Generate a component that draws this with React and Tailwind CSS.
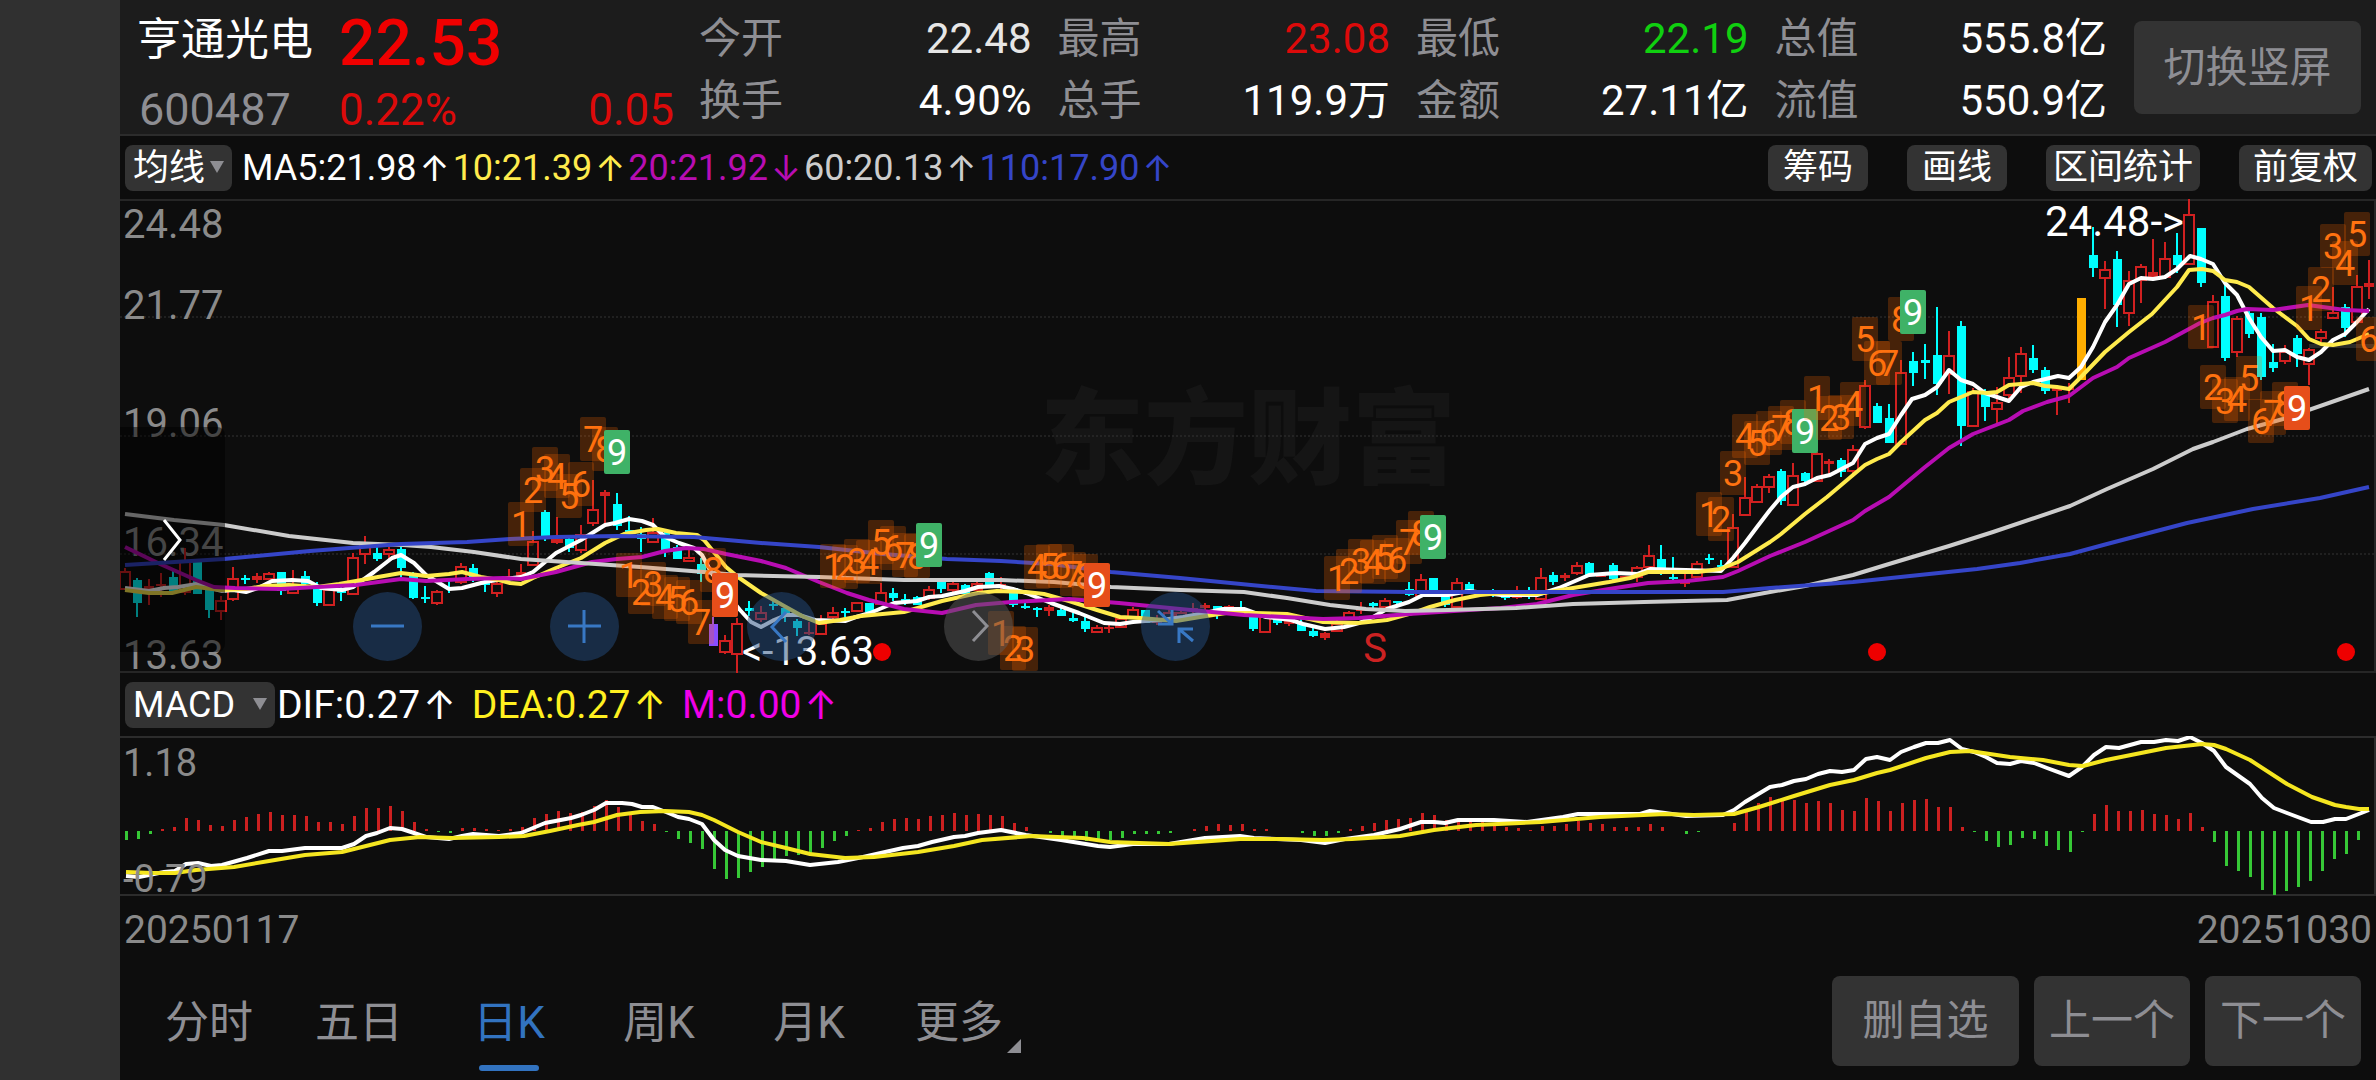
import { useState } from "react";

const STEP = 12;
const xAt = (i) => 125 + i * STEP;

/* kind, high, body top, body bottom, low
   r = hollow red, R = solid red, c = cyan, p = purple, a = amber */
const candles = `
r 568 571 589 589,c 578 580 603 617,R 579 586 589 605,R 573 584 586 597,c 571 577 591 591,r 548 560 592 595,
c 562 562 594 594,c 586 590 610 618,r 596 600 611 620,r 567 578 599 601,c 575 578 580 584,R 573 576 580 583,
r 572 573 579 580,c 572 572 591 595,r 570 585 593 593,c 571 576 584 585,c 582 586 603 606,r 589 589 605 605,
c 587 590 593 601,r 553 557 594 594,r 536 542 554 564,c 547 553 559 561,r 547 549 554 559,c 547 549 568 577,
c 572 573 598 599,c 586 597 598 603,r 590 591 603 605,c 581 587 588 593,r 563 566 582 584,c 564 568 577 582,
c 580 583 585 592,r 581 583 593 597,R 569 576 577 580,R 564 572 576 579,r 531 541 565 565,c 510 512 539 541,
r 517 539 542 544,c 537 539 548 552,r 525 534 550 553,r 480 509 523 526,R 490 492 496 523,c 493 504 526 530,
c 516 530 532 535,c 527 534 539 552,r 518 532 542 543,c 532 533 551 557,c 545 547 559 559,r 548 557 561 561,
c 558 564 574 582,p 617 624 646 646,r 635 640 652 654,r 618 623 654 673,c 601 608 611 616,r 606 612 619 622,
c 600 604 606 610,c 606 608 615 622,c 619 621 628 636,R 622 632 634 635,r 615 623 634 635,r 607 612 617 620,
c 608 611 612 617,r 602 602 611 611,c 603 603 612 612,r 583 592 604 604,c 588 593 598 601,c 594 599 601 605,
c 596 597 605 605,r 586 589 598 600,c 580 582 589 593,r 582 583 590 592,c 584 585 594 594,r 582 583 590 590,
c 572 573 587 587,R 577 584 586 590,c 588 588 605 607,c 602 606 608 609,c 607 608 610 617,R 605 607 611 616,
c 608 610 616 616,c 613 618 621 622,c 617 621 629 632,r 625 627 632 632,R 624 627 629 633,r 617 618 627 627,
r 607 609 617 617,c 610 610 623 623,R 615 621 622 625,r 610 612 618 620,r 608 612 617 618,R 603 608 611 613,
R 603 605 608 610,c 606 606 611 619,R 605 606 608 610,c 601 609 611 611,c 612 616 629 631,r 612 616 632 632,
c 616 617 623 625,R 618 621 624 626,c 619 623 631 631,c 627 631 636 637,R 632 633 638 640,r 620 623 631 631,
r 611 612 618 620,R 602 609 611 614,c 602 603 606 609,r 598 600 607 608,c 601 601 603 606,c 582 589 595 596,
r 574 579 596 597,c 578 578 590 593,c 594 596 605 607,r 578 582 607 607,c 582 584 591 594,c 592 592 594 594,
c 589 592 594 597,c 595 596 598 600,R 586 596 598 599,c 587 594 597 599,r 568 577 599 599,c 572 575 582 585,
R 573 575 578 581,r 562 565 573 575,c 562 563 575 575,R 575 575 577 577,c 563 565 579 580,R 576 576 577 578,
r 566 567 577 582,r 545 555 567 570,c 545 559 570 575,c 557 577 579 583,R 572 581 584 587,r 561 563 577 577,
c 554 558 560 564,c 560 565 566 572,r 514 527 567 567,r 477 497 515 515,r 484 486 502 503,r 474 476 487 493,
c 469 471 501 505,r 463 475 505 505,c 472 473 481 486,r 452 453 481 482,R 459 461 464 476,c 458 460 472 477,
r 445 449 471 473,r 380 385 427 429,c 403 406 423 423,c 404 418 443 443,r 360 372 444 444,c 352 361 373 386,
c 344 360 363 379,c 307 355 384 395,r 331 355 374 394,c 321 326 426 446,r 388 391 426 427,c 389 391 407 421,
r 387 402 409 423,r 357 377 395 402,r 347 353 376 393,c 345 358 370 373,c 367 370 391 394,R 385 388 391 415,
R 383 387 390 403,a 298 298 380 380,c 227 255 268 277,r 261 269 278 309,c 251 259 305 327,r 271 280 313 326,
r 264 266 280 303,R 239 272 277 278,r 242 258 277 277,c 233 255 265 273,r 199 214 264 264,c 228 228 283 287,
r 295 301 347 347,c 285 296 358 361,r 316 318 352 357,c 310 313 334 338,c 313 317 377 380,c 344 362 368 372,
r 345 351 361 364,c 335 338 354 367,r 348 349 364 385,r 329 331 338 342,r 287 312 318 318,c 304 307 328 337,
r 275 286 322 322,R 260 283 287 299`
  .split(",")
  .map((row) => {
    const [kind, ...v] = row.trim().split(" ");
    return [kind, ...v.map(Number)];
  });

const candleColors = {
  r: "#d02020",
  R: "#d02020",
  c: "#00ffff",
  p: "#8a4dff",
  a: "#ffae00"
};

const averages = [
  {
    color: "#ffffff",
    points:
      "125,588 149,591 164,588 178,587 197,584 210,588 222,591 233,590 246,592 258,588 272,581 292,580 308,581 321,588 342,590 353,587 374,572 392,558 401,555 414,563 426,575 449,589 462,588 485,582 497,580 521,577 533,572 556,553 581,540 605,525 615,523 629,519 642,521 653,525 665,537 679,543 694,548 702,555 711,572 726,593 740,610 751,622 761,627 774,620 786,615 799,615 815,620 845,621 856,617 870,613 894,603 917,601 929,597 942,596 965,591 978,587 999,586 1013,589 1026,593 1051,603 1079,613 1104,623 1120,624 1133,622 1145,621 1161,620 1183,617 1205,613 1223,609 1244,609 1266,617 1291,620 1303,624 1325,629 1344,627 1359,623 1373,617 1387,609 1409,602 1423,595 1448,595 1469,591 1501,595 1537,595 1559,588 1589,575 1616,573 1637,574 1650,569 1721,571 1733,558 1745,543 1757,527 1770,510 1781,497 1793,487 1805,484 1817,478 1830,475 1853,463 1865,444 1877,438 1889,434 1901,415 1912,399 1925,395 1937,387 1949,370 1961,380 1973,384 1985,393 2009,401 2021,387 2033,382 2058,376 2069,378 2081,367 2093,347 2105,322 2117,305 2129,284 2141,278 2153,279 2165,277 2177,269 2190,256 2201,259 2213,264 2225,283 2237,295 2249,318 2261,337 2273,351 2285,350 2297,357 2309,360 2321,352 2333,340 2345,334 2357,322 2369,309"
  },
  {
    color: "#ffeb4d",
    points:
      "125,590 149,593 172,593 196,587 221,590 246,589 264,586 289,585 317,587 339,584 356,581 378,577 401,573 426,576 449,574 462,572 481,577 499,580 510,583 521,584 533,578 556,568 581,558 605,543 624,534 646,530 658,529 676,533 697,535 704,540 726,567 738,577 761,593 786,607 804,617 819,623 840,620 861,616 904,612 942,601 978,593 997,591 1026,592 1044,594 1069,601 1097,610 1120,617 1140,618 1176,621 1200,617 1226,613 1255,613 1287,614 1305,618 1323,622 1359,623 1387,620 1416,612 1430,607 1455,600 1480,595 1501,593 1537,594 1573,588 1609,582 1630,578 1648,572 1698,572 1720,569 1738,562 1770,542 1781,534 1805,514 1827,497 1853,475 1865,465 1877,459 1889,454 1901,442 1925,420 1937,413 1949,402 1973,392 1987,393 1997,392 2009,385 2033,383 2045,386 2057,387 2069,389 2081,377 2105,352 2129,332 2152,314 2177,287 2189,270 2202,269 2213,271 2225,280 2237,282 2249,287 2273,308 2297,326 2309,339 2321,344 2333,345 2350,342 2369,334"
  },
  {
    color: "#b80db3",
    points:
      "125,547 160,564 196,580 214,587 235,588 281,589 317,587 356,585 401,579 426,581 467,579 503,578 521,579 556,572 592,562 617,559 642,557 665,551 686,548 704,549 726,554 761,561 786,568 819,582 847,593 869,600 904,609 942,613 976,605 1011,602 1069,599 1119,603 1180,609 1244,615 1323,619 1359,618 1409,614 1469,610 1501,608 1537,604 1573,595 1609,589 1648,583 1687,581 1723,577 1738,571 1770,556 1805,542 1853,520 1865,511 1889,497 1925,467 1949,448 1973,434 2009,420 2023,411 2047,402 2069,396 2093,378 2117,367 2129,358 2165,342 2200,323 2213,318 2225,315 2237,311 2247,309 2273,310 2308,305 2345,310 2369,311"
  },
  {
    color: "#cccccc",
    points:
      "125,514 174,520 224,525 289,536 353,543 403,545 431,547 474,552 521,559 581,563 640,567 704,572 736,575 819,577 904,580 1001,580 1054,582 1111,587 1180,590 1244,592 1287,598 1330,605 1366,609 1405,611 1448,610 1516,608 1573,604 1644,602 1727,600 1770,592 1805,586 1853,575 1889,564 1949,546 1993,532 2070,506 2107,489 2153,469 2193,449 2213,442 2247,429 2283,419 2369,389"
  },
  {
    color: "#3545c8",
    points:
      "125,565 224,559 310,551 401,544 467,542 510,539 556,537 617,536 694,537 761,543 819,547 883,554 947,559 1001,561 1051,564 1111,572 1180,578 1251,585 1316,591 1409,592 1516,592 1626,592 1723,592 1770,588 1853,582 1910,576 1977,569 2020,563 2070,554 2107,544 2187,523 2253,509 2320,498 2369,487"
  }
];

/* runs of sequence counters: first candle index, then the top of each mark */
const runs = [
  { start: 33, tops: [502, 468, 447, 454, 474, 462, 417, 427, 430], last: "#3fb267" },
  { start: 42, tops: [553, 570, 562, 575, 577, 580, 600, 548, 573], last: "#e64e1a" },
  { start: 59, tops: [544, 545, 539, 540, 520, 526, 533, 534, 523], last: "#3fb267" },
  { start: 73, tops: [611, 626, 627, 545, 544, 544, 552, 554, 563], last: "#e64e1a" },
  { start: 101, tops: [556, 549, 539, 540, 535, 538, 520, 511, 515], last: "#3fb267" },
  { start: 132, tops: [492, 497, 451, 414, 421, 411, 406, 400, 409], last: "#3fb267" },
  { start: 141, tops: [376, 396, 395, 382, 317, 341, 341, 297, 290], last: "#3fb267" },
  { start: 173, tops: [305, 365, 379, 377, 356, 399, 391, 382, 386], last: "#e64e1a" },
  { start: 182, tops: [286, 267, 224, 241, 212, 317], last: null }
];

const macdBars = [
  -9, -8, -3, 2, 4, 13, 11, 6, 5, 11, 14, 17, 19, 16, 16, 15, 9, 9, 7, 15, 23, 23, 25, 20, 9, 2, -1, -2, 3, 3,
  2, 1, 2, 4, 13, 17, 20, 18, 19, 25, 31, 24, 18, 10, 7, -1, -8, -12, -18, -38, -48, -47, -41, -36, -28, -25,
  -24, -22, -17, -10, -5, 1, 3, 9, 12, 13, 12, 15, 16, 18, 16, 17, 16, 15, 8, 4, 0, -2, -6, -8, -10, -10, -9,
  -7, -3, -3, -3, -2, 0, 2, 5, 7, 6, 7, 2, 2, 0, 0, -2, -5, -5, -2, 2, 5, 8, 11, 12, 13, 18, 16, 11, 12, 11, 9,
  6, 4, 3, 1, 5, 5, 7, 10, 8, 7, 4, 4, 4, 7, 4, 0, -3, -1, 0, 0, 8, 21, 28, 34, 32, 31, 28, 30, 28, 21, 20, 33,
  30, 20, 28, 31, 32, 24, 24, 4, -1, -10, -16, -14, -7, -8, -15, -19, -21, -1, 17, 26, 20, 20, 21, 17, 16, 12,
  18, 4, -11, -35, -40, -46, -59, -64, -60, -56, -50, -40, -28, -23, -9, 0
];

const difLine =
  "126,876 139,877 164,872 175,871 186,864 198,863 211,866 222,865 247,858 269,851 282,851 305,848 342,848 354,844 366,836 377,833 390,828 402,829 414,833 426,837 449,839 462,836 473,834 499,836 521,833 545,823 571,818 581,815 594,810 606,803 622,803 632,804 642,807 653,807 666,812 678,817 689,819 702,824 714,840 725,850 738,856 761,860 786,861 810,865 838,862 863,857 903,848 918,846 932,842 954,837 965,836 978,833 1001,830 1026,835 1061,840 1098,846 1110,847 1133,844 1169,844 1205,838 1240,836 1254,838 1301,840 1325,843 1345,839 1374,835 1400,829 1421,822 1434,822 1445,823 1458,820 1494,820 1527,822 1563,817 1578,814 1640,814 1650,811 1665,813 1686,816 1723,815 1734,810 1745,802 1770,787 1782,785 1794,781 1806,779 1818,774 1830,771 1842,772 1854,770 1866,759 1877,757 1890,760 1901,752 1914,747 1926,743 1938,743 1950,740 1962,749 1974,752 1986,757 1997,763 2010,764 2021,761 2034,763 2047,768 2069,776 2082,767 2094,755 2106,747 2119,748 2141,742 2154,742 2166,740 2178,741 2190,737 2202,743 2214,751 2226,767 2250,784 2262,798 2274,808 2287,813 2311,822 2323,822 2335,819 2346,819 2369,810";

const deaLine =
  "126,872 153,873 175,873 196,870 234,867 269,861 305,855 342,852 366,846 390,840 420,837 452,838 499,837 524,836 550,831 578,825 594,822 617,815 640,812 665,811 689,812 702,815 714,820 738,832 761,842 786,848 810,854 845,858 874,857 918,852 954,846 982,840 1032,836 1083,838 1110,842 1169,844 1240,839 1280,839 1323,840 1352,839 1400,836 1434,830 1476,825 1541,822 1600,817 1665,814 1694,815 1734,814 1759,807 1794,796 1830,785 1854,780 1877,773 1890,770 1926,758 1950,752 1970,751 2010,757 2043,760 2069,765 2083,766 2106,760 2166,748 2202,744 2214,745 2226,749 2250,760 2287,784 2312,797 2335,805 2346,807 2359,809 2369,809";

const stats = [
  [
    { label: "今开", value: "22.48", color: "text-[#e6e6e6]" },
    { label: "换手", value: "4.90%", color: "text-white" }
  ],
  [
    { label: "最高", value: "23.08", color: "text-[#dc0a0a]" },
    { label: "总手", value: "119.9万", color: "text-white" }
  ],
  [
    { label: "最低", value: "22.19", color: "text-[#10d010]" },
    { label: "金额", value: "27.11亿", color: "text-white" }
  ],
  [
    { label: "总值", value: "555.8亿", color: "text-white" },
    { label: "流值", value: "550.9亿", color: "text-white" }
  ]
];

const maLegend = [
  { text: "MA5:21.98", arrow: "↑", color: "text-white" },
  { text: "10:21.39", arrow: "↑", color: "text-[#ffeb4d]" },
  { text: "20:21.92", arrow: "↓", color: "text-[#b80db3]" },
  { text: "60:20.13", arrow: "↑", color: "text-[#cccccc]" },
  { text: "110:17.90", arrow: "↑", color: "text-[#3545c8]" }
];

const macdLegend = [
  { text: "DIF:0.27", arrow: "↑", color: "text-white" },
  { text: "DEA:0.27", arrow: "↑", color: "text-[#fff020]" },
  { text: "M:0.00", arrow: "↑", color: "text-[#f000e6]" }
];

const Legend = ({ items, className }) => (
  <ul className={`flex items-center leading-[44px] ${className}`}>
    {items.map((item) => (
      <li key={item.text} className={`flex items-center gap-[3px] ${item.color}`}>
        <span>{item.text}</span>
        <span className="font-['Inter']">{item.arrow}</span>
      </li>
    ))}
  </ul>
);

const IndicatorSelect = ({ label, options, width }) => (
  <div className={`relative shrink-0 ${width}`}>
    <select
      aria-label={label}
      className="block h-[46px] w-full appearance-none rounded-lg bg-[#333333] pl-2 text-[36px] leading-[44px] text-white"
    >
      {options.map((o) => (
        <option key={o}>{o}</option>
      ))}
    </select>
    <svg viewBox="0 0 14 12" className="pointer-events-none absolute right-2 top-4 h-3 w-[14px]">
      <path d="M0 0H14L7 12Z" fill="#8e8e93" />
    </svg>
  </div>
);

const Candle = ({ index, data }) => {
  const [kind, high, top, bottom, low] = data;
  const x = xAt(index);
  const color = candleColors[kind];
  const height = Math.max(bottom - top, 2);

  if (kind === "r") {
    return (
      <g stroke={color} strokeWidth="2" fill="none">
        <path d={`M${x} ${high}V${top}M${x} ${bottom}V${low}`} />
        <rect x={x - 5} y={top + 1} width="10" height={Math.max(height - 1, 2)} />
      </g>
    );
  }

  return (
    <g fill={color}>
      <rect x={x - 1} y={high} width="2" height={low - high} />
      <rect x={kind === "R" ? x - 5 : x - 4} y={top} width={kind === "R" ? 10 : 9} height={height} />
    </g>
  );
};

const PriceChart = () => (
  <svg viewBox="120 199 2256 474" className="block w-full" fontSize="40">
    <text
      x="1248"
      y="476"
      textAnchor="middle"
      fontSize="104"
      fontWeight="900"
      fill="#151515"
    >
      东方财富
    </text>

    {[317, 436, 554].map((y) => (
      <path key={y} d={`M120 ${y}H2376`} stroke="#343434" strokeDasharray="2 2" />
    ))}
    <path d="M120 200H2375V672H120" fill="none" stroke="#262626" strokeWidth="2" />
    <rect x="2309" y="344" width="67" height="4" fill="#2a2a2a" />

    <g fill="#8a8a8a">
      <text x="123" y="238">24.48</text>
      <text x="123" y="319">21.77</text>
      <text x="123" y="437">19.06</text>
      <text x="123" y="556">16.34</text>
      <text x="123" y="669">13.63</text>
    </g>

    {candles.map((c, i) => (
      <Candle key={i} index={i} data={c} />
    ))}

    {averages.map((line) => (
      <polyline
        key={line.color}
        points={line.points}
        fill="none"
        stroke={line.color}
        strokeWidth="4"
        strokeLinejoin="round"
      />
    ))}

    {/* sequence marks */}
    {runs.map((run) =>
      run.tops.map((top, n) => {
        const x = xAt(run.start + n);
        const solid = n === 8;
        return (
          <g key={x}>
            <rect
              x={x - 13}
              y={top}
              width="26"
              height="44"
              rx="2"
              fill={solid ? run.last : "#ff6a00"}
              fillOpacity={solid ? 1 : 0.24}
            />
            <text
              x={x}
              y={top + 35}
              textAnchor="middle"
              fontSize="36"
              fill={solid ? "#ffffff" : "#ff7210"}
            >
              {n + 1}
            </text>
          </g>
        );
      })
    )}

    {/* event marks */}
    <g fill="#ee0000">
      <circle cx="882" cy="652" r="9" />
      <circle cx="1877" cy="652" r="9" />
      <circle cx="2346" cy="652" r="9" />
    </g>
    <text x="1375" y="662" textAnchor="middle" fill="#cc2222">S</text>
    <text x="742" y="665" fill="#ffffff">&lt;-13.63</text>
    <text x="2184" y="236" textAnchor="end" fontSize="42" fill="#ffffff">24.48-&gt;</text>
  </svg>
);

const MacdChart = () => (
  <svg viewBox="120 736 2256 160" className="block w-full" fontSize="38">
    <path d="M120 737H2375V895H120" fill="none" stroke="#2c2c2c" strokeWidth="2" />
    {macdBars.map((v, i) => (
      <rect
        key={i}
        x={xAt(i)}
        y={v > 0 ? 831 - v : 831}
        width="3"
        height={Math.abs(v)}
        fill={v > 0 ? "#cc2020" : "#36c836"}
      />
    ))}
    <polyline points={difLine} fill="none" stroke="#ffffff" strokeWidth="4" strokeLinejoin="round" />
    <polyline points={deaLine} fill="none" stroke="#f5e620" strokeWidth="4" strokeLinejoin="round" />
    <g fill="#8a8a8a">
      <text x="123" y="776">1.18</text>
      <text x="123" y="892">-0.79</text>
    </g>
  </svg>
);

const chartControls = [
  { name: "缩小", path: "M18 34H51", tone: "bg-[#234b7d]/50 text-[#3878c4]" },
  { name: "放大", path: "M18 34H51M34 18V51", tone: "bg-[#234b7d]/50 text-[#3878c4]" },
  { name: "左移", path: "M39 20L25 35L39 50", tone: "bg-[#234b7d]/50 text-[#3878c4]" },
  { name: "右移", path: "M29 19L43 34L29 49", tone: "bg-[#5a5a5a]/50 text-[#8e8e93]" },
  {
    name: "收起",
    path: "M17 19L31 32M31 18V32H17M52 49L38 37M38 51V37H52",
    tone: "bg-[#234b7d]/50 text-[#3878c4]"
  }
];

const tabs = ["分时", "五日", "日K", "周K", "月K", "更多"];

const App = () => {
  const [tab, setTab] = useState("日K");

  return (
    <div className="flex min-h-screen bg-[#0d0d0d] font-['Roboto','Noto_Sans_CJK_SC',sans-serif] text-white">
      <aside className="w-[120px] shrink-0 bg-[#303030]" />

      <main className="flex min-w-0 flex-1 flex-col">

        {/* QUOTE HEADER */}

        <header className="flex h-[136px] items-start border-b-2 border-[#2c2c2c] bg-[#1c1c1c] pl-4 pr-[15px] pt-2">

          <div className="w-[203px] shrink-0 pl-px">
            <h1 className="mb-2 text-[44px] leading-[64px]">亨通光电</h1>
            <p className="pl-[2px] text-[45px] leading-[60px] text-[#8e8e93]">600487</p>
          </div>

          <div className="w-[335px] shrink-0">
            <p className="text-[64px] font-medium leading-[72px] text-[#f00000]">22.53</p>
            <p className="flex justify-between text-[44px] leading-[60px] text-[#dc0a0a]">
              <span>0.22%</span>
              <span>0.05</span>
            </p>
          </div>

          <div className="grid flex-1 grid-cols-4 gap-x-[26px] pl-[25px] pr-[27px]">
            {stats.map((column) => (
              <dl key={column[0].label}>
                {column.map((s) => (
                  <div key={s.label} className="flex justify-between text-[42px] leading-[62px]">
                    <dt className="text-[#8e8e93]">{s.label}</dt>
                    <dd className={s.color}>{s.value}</dd>
                  </div>
                ))}
              </dl>
            ))}
          </div>

          <button className="mt-[13px] h-[93px] w-[227px] shrink-0 rounded-lg bg-[#333333] text-[42px] text-[#8e8e93]">
            切换竖屏
          </button>

        </header>

        {/* AVERAGES BAR */}

        <div className="flex h-[63px] items-center pl-[5px] pr-1">
          <IndicatorSelect label="主图指标" options={["均线", "BOLL"]} width="w-[107px]" />
          <div className="ml-[10px]">
            <Legend items={maLegend} className="gap-[3px] text-[36px]" />
          </div>
          <div className="ml-auto flex gap-[39px] text-[35px] leading-[46px]">
            <button className="rounded-lg bg-[#333333] px-[15px]">筹码</button>
            <button className="rounded-lg bg-[#333333] px-[15px]">画线</button>
            <button className="rounded-lg bg-[#333333] px-[7px]">区间统计</button>
            <button className="rounded-lg bg-[#333333] px-[14px]">前复权</button>
          </div>
        </div>

        {/* PRICE CHART */}

        <div className="relative">
          <PriceChart />

          <button
            aria-label="展开侧栏"
            className="absolute left-0 top-[228px] flex h-[225px] w-[105px] items-center justify-center rounded-r-lg bg-black/50"
          >
            <svg viewBox="0 0 24 44" className="h-11 w-6" fill="none" stroke="#ffffff" strokeWidth="3">
              <path d="M3 2L19 22L3 42" />
            </svg>
          </button>

          <div className="absolute left-[233px] top-[393px] flex gap-32">
            {chartControls.map((c) => (
              <button key={c.name} aria-label={c.name} className={`h-[69px] w-[69px] rounded-full ${c.tone}`}>
                <svg viewBox="0 0 69 69" className="h-full w-full" fill="none" stroke="currentColor" strokeWidth="3">
                  <path d={c.path} />
                </svg>
              </button>
            ))}
          </div>
        </div>

        {/* MACD */}

        <div className="flex h-[63px] items-center gap-[2px] pl-[5px]">
          <IndicatorSelect label="副图指标" options={["MACD", "KDJ"]} width="w-[150px]" />
          <Legend items={macdLegend} className="gap-4 text-[39px]" />
        </div>

        <MacdChart />

        <div className="flex justify-between px-1 pt-[2px] text-[39px] leading-[64px] text-[#8a8a8a]">
          <time>20250117</time>
          <time>20251030</time>
        </div>

        {/* PERIOD TABS */}

        <footer className="flex flex-1 items-center justify-between pl-[14px] pr-[15px]">

          <nav className="flex pt-1 text-[44px] leading-[60px]">
            {tabs.map((t) => (
              <button
                key={t}
                onClick={() => setTab(t)}
                className={
                  t === tab
                    ? "relative w-[150px] text-[#3273c0]"
                    : "relative w-[150px] text-[#8e8e93]"
                }
              >
                {t}
                {t === tab && (
                  <span className="absolute -bottom-[18px] left-[45px] h-[6px] w-[60px] rounded-full bg-[#3273c0]" />
                )}
                {t === "更多" && (
                  <svg viewBox="0 0 14 14" className="absolute bottom-0 right-[13px] h-[14px] w-[14px]">
                    <path d="M14 0V14H0Z" fill="#8e8e93" />
                  </svg>
                )}
              </button>
            ))}
          </nav>

          <div className="flex gap-[15px] text-[42px] leading-[90px] text-[#8e8e93]">
            <button className="w-[187px] rounded-lg bg-[#333333]">删自选</button>
            <button className="w-[156px] rounded-lg bg-[#333333]">上一个</button>
            <button className="w-[156px] rounded-lg bg-[#333333]">下一个</button>
          </div>

        </footer>

      </main>
    </div>
  );
};

export default App;
